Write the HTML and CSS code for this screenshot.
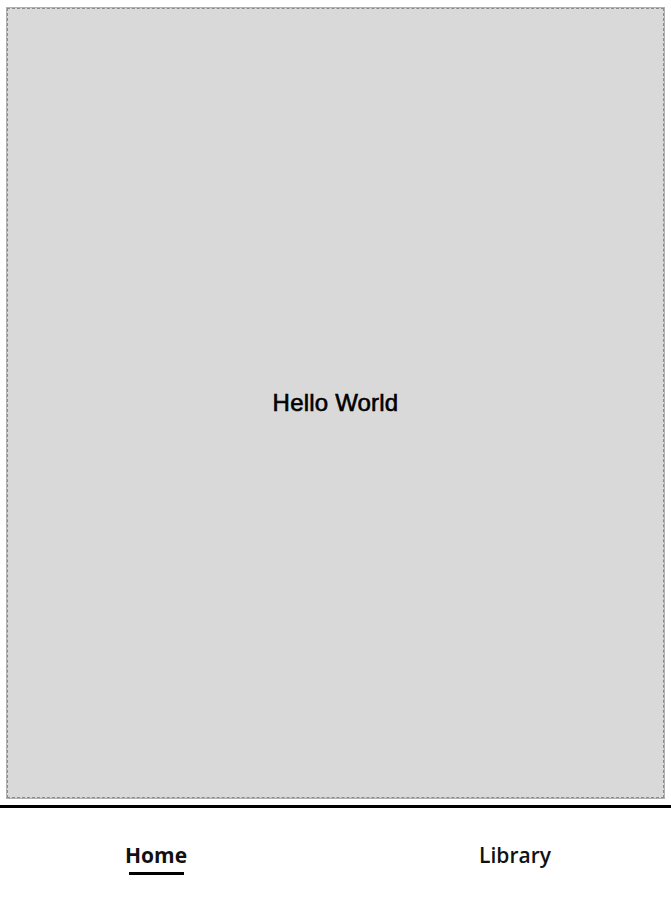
FILE: index.html
```html
<!DOCTYPE html>
<html>
<head>
<meta charset="utf-8">
<link rel="stylesheet" href="styles.css">
</head>
<body>
<main class="stage">
  <div class="canvas">Hello World</div>
</main>
<nav class="tabs">
  <div class="tab active"><span class="label">Home</span><span class="bar"></span></div>
  <div class="tab"><span class="label">Library</span></div>
</nav>
</body>
</html>
```
FILE: styles.css
```css
html, body { margin: 0; padding: 0; background: #fff; }
body { width: 671px; height: 906px; overflow: hidden; }
.stage { padding: 8px 7px 7px 7px; }
.canvas {
  height: 788px;
  background: #d9d9d9;
  border: 1px dashed #8a8a8a;
  outline: 1px solid #b0b0b0;
  display: flex;
  align-items: center;
  justify-content: center;
  font-family: "Liberation Sans", Arial, sans-serif;
  font-size: 24px;
  letter-spacing: 0.2px;
  -webkit-text-stroke: 0.6px #000;
  color: #000;
}
.tabs {
  border-top: 3px solid #000;
  display: grid;
  grid-template-columns: 359px 359px;
  justify-content: center;
  height: 95px;
}
.tab {
  display: flex;
  flex-direction: column;
  align-items: center;
  padding-top: 33px;
}
.label {
  font-family: "Open Sans", sans-serif;
  font-size: 21px;
  font-weight: 600;
  color: #111;
  height: 29px;
  line-height: 29px;
}
.tab.active .label { font-weight: 700; }
.bar {
  width: 55px;
  height: 3px;
  background: #000;
  margin-top: 2px;
}
```
